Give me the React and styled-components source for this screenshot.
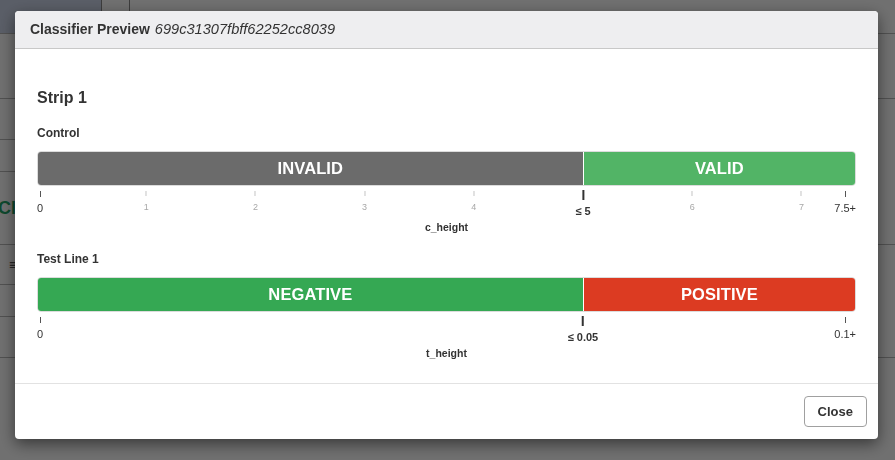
import React from "react";
import styled, { createGlobalStyle } from "styled-components";

const Global = createGlobalStyle`
  html, body { margin: 0; padding: 0; }
  body {
    width: 895px; height: 460px; overflow: hidden;
    font-family: "Liberation Sans", Arial, Helvetica, sans-serif;
    background: #fff; color: #333;
  }
`;

/* ---------- background page (under the backdrop) ---------- */
const Page = styled.div`
  width: 895px; height: 460px; display: flex; flex-direction: column;
`;
const NavBar = styled.div`
  height: 33px; display: flex; border-bottom: 1px solid #b8b8b8; flex-shrink: 0;
`;
const Brand = styled.div`
  width: 101px; background: #cdd6ea; border-right: 1px solid #8a8a8a;
`;
const NavTab = styled.div`
  width: 27px; background: #fff; border-right: 1px solid #8a8a8a;
`;
const Columns = styled.div`
  flex: 1; display: flex;
`;
const SideList = styled.div`
  width: 300px; display: flex; flex-direction: column;
`;
const MainList = styled.div`
  flex: 1; display: flex; flex-direction: column;
`;
const PageRow = styled.div`
  height: ${(p) => p.$h}px; border-bottom: 1px solid #b8b8b8; flex-shrink: 0;
  display: flex; align-items: center;
  box-sizing: border-box;
`;
const PageHeading = styled.span`
  font-size: 18px; font-weight: bold; color: #20a567; margin-left: -2px;
`;
const PageGlyph = styled.span`
  font-size: 12px; color: #333; margin-left: 9px;
`;

/* ---------- modal ---------- */
const Backdrop = styled.div`
  position: fixed; inset: 0; background: rgba(0, 0, 0, 0.56);
  display: flex; align-items: flex-start; justify-content: flex-start;
  padding: 11px 0 0 15px; box-sizing: border-box;
`;
const Modal = styled.div`
  width: 863px; background: #fff; border-radius: 4px;
  box-shadow: 0 5px 15px rgba(0, 0, 0, 0.5);
  display: flex; flex-direction: column; overflow: hidden;
`;
const Header = styled.div`
  background: #eeeef0; border-bottom: 1px solid #c8c8c8;
  padding: 10px 15px; font-size: 14px; line-height: 17px; color: #333;
`;
const Title = styled.span`
  font-weight: bold;
`;
const Hash = styled.span`
  font-style: italic; margin-left: 5px; font-size: 14.6px;
`;
const Body = styled.div`
  padding: 39px 22px 23px; display: flex; flex-direction: column;
`;
const StripTitle = styled.div`
  font-size: 16px; line-height: 20px; font-weight: bold; color: #333;
`;
const Section = styled.div`
  margin-top: ${(p) => p.$top}px; display: flex; flex-direction: column;
`;
const LineLabel = styled.div`
  font-size: 12px; line-height: 15px; font-weight: bold; color: #333;
  margin-bottom: 10px;
`;
const Bar = styled.div`
  height: 35px; box-sizing: border-box; display: flex; gap: 1px;
  border: 1px solid #dcdcdc; border-radius: 4px; overflow: hidden; background: #fff;
`;
const Segment = styled.div`
  background: ${(p) => p.$color};
  display: flex; align-items: center; justify-content: center;
  color: #fff; font-weight: bold; font-size: 16.5px; letter-spacing: 0.1px;
`;
const Axis = styled.div`
  position: relative; height: 34px;
`;
const TickGroup = styled.div`
  position: absolute; top: ${(p) => (p.$kind === "threshold" ? 4 : 5)}px;
  display: flex; flex-direction: column; align-items: center;
  transform: ${(p) => (p.$edge ? "none" : "translateX(-50%)")};
`;
const TickMark = styled.div`
  width: ${(p) => (p.$kind === "threshold" ? 2 : 1)}px;
  height: ${(p) => (p.$kind === "threshold" ? 10 : p.$kind === "edge" ? 6 : 5)}px;
  background: ${(p) => (p.$kind === "threshold" ? "#333" : p.$kind === "edge" ? "#555" : "#c4c4c4")};
`;
const TickLabel = styled.div`
  white-space: nowrap;
  font-size: ${(p) => (p.$kind === "minor" ? 9 : 11)}px;
  line-height: ${(p) => (p.$kind === "minor" ? 11 : 13)}px;
  font-weight: ${(p) => (p.$kind === "threshold" ? "bold" : "normal")};
  color: ${(p) => (p.$kind === "minor" ? "#a8a8a8" : "#333")};
  margin-top: ${(p) => (p.$kind === "minor" ? 6 : 5)}px;
`;
const AxisTitle = styled.div`
  text-align: center; font-size: 10.5px; line-height: 14px; font-weight: bold; color: #333;
`;
const Footer = styled.div`
  border-top: 1px solid #e2e2e2; padding: 12px 11px; display: flex; justify-content: flex-end;
`;
const CloseButton = styled.button`
  height: 31px; padding: 0 13px; background: #fff; color: #333;
  border: 1px solid #a0a0a0; border-radius: 4px;
  font-family: "Liberation Sans", Arial, sans-serif; font-size: 13px; font-weight: bold;
  cursor: pointer;
`;

const lines = [
  {
    label: "Control",
    segments: [
      { text: "INVALID", color: "#6b6b6b" },
      { text: "VALID", color: "#52b466" },
    ],
    threshold: "≤ 5",
    max: "7.5+",
    minor: [1, 2, 3, 4, 6, 7],
    scaleMax: 7.5,
    axis: "c_height",
  },
  {
    label: "Test Line 1",
    segments: [
      { text: "NEGATIVE", color: "#35a853" },
      { text: "POSITIVE", color: "#dc3b22" },
    ],
    threshold: "≤ 0.05",
    max: "0.1+",
    minor: [],
    scaleMax: 7.5,
    axis: "t_height",
  },
];

const SPLIT = 200 / 3;

function Tick({ kind, label, left, right, edge }) {
  const style = {};
  if (left !== undefined) style.left = left;
  if (right !== undefined) style.right = right;
  return (
    <TickGroup $kind={kind} $edge={edge} style={style}>
      <TickMark $kind={kind} />
      <TickLabel $kind={kind}>{label}</TickLabel>
    </TickGroup>
  );
}

function StripLine({ line, top }) {
  return (
    <Section $top={top}>
      <LineLabel>{line.label}</LineLabel>
      <Bar>
        <Segment $color={line.segments[0].color} style={{ width: `${SPLIT}%` }}>
          {line.segments[0].text}
        </Segment>
        <Segment $color={line.segments[1].color} style={{ flex: 1 }}>
          {line.segments[1].text}
        </Segment>
      </Bar>
      <Axis>
        <Tick kind="edge" label="0" left={0} edge />
        {line.minor.map((v) => (
          <Tick key={v} kind="minor" label={String(v)} left={`${(v / line.scaleMax) * 100}%`} />
        ))}
        <Tick kind="threshold" label={line.threshold} left={`${SPLIT}%`} />
        <Tick kind="edge" label={line.max} right={0} edge />
      </Axis>
      <AxisTitle>{line.axis}</AxisTitle>
    </Section>
  );
}

export default function App() {
  return (
    <>
      <Global />
      <Page>
        <NavBar>
          <Brand />
          <NavTab />
        </NavBar>
        <Columns>
          <SideList>
            <PageRow $h={65} />
            <PageRow $h={41} />
            <PageRow $h={32} />
            <PageRow $h={73}><PageHeading>Cl</PageHeading></PageRow>
            <PageRow $h={40}><PageGlyph>≡</PageGlyph></PageRow>
            <PageRow $h={32} />
            <PageRow $h={41} />
          </SideList>
          <MainList>
            <PageRow $h={65} />
            <PageRow $h={146} />
            <PageRow $h={113} />
          </MainList>
        </Columns>
      </Page>
      <Backdrop>
        <Modal>
          <Header>
            <Title>Classifier Preview</Title>
            <Hash>699c31307fbff62252cc8039</Hash>
          </Header>
          <Body>
            <StripTitle>Strip 1</StripTitle>
            <StripLine line={lines[0]} top={18} />
            <StripLine line={lines[1]} top={18} />
          </Body>
          <Footer>
            <CloseButton>Close</CloseButton>
          </Footer>
        </Modal>
      </Backdrop>
    </>
  );
}
